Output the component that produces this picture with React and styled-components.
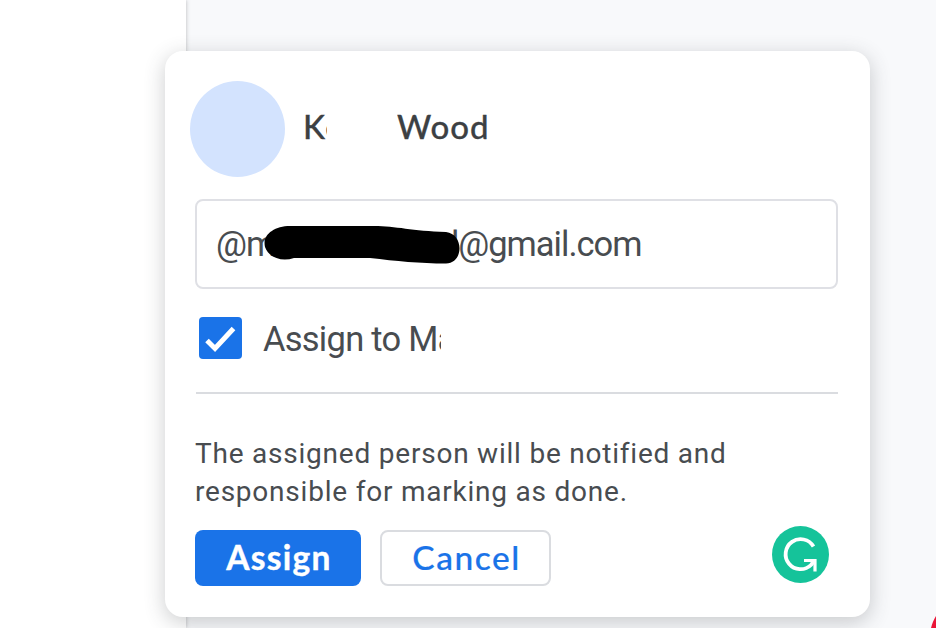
// App.jsx
import React, { useState } from "react";
import styled, { createGlobalStyle } from "styled-components";

const GlobalStyle = createGlobalStyle`
    * {
        box-sizing: border-box;
    }

    body {
        margin: 0;
        overflow: hidden;
        font-family: Roboto, sans-serif;
        color: #484c50;
    }
`;

const Page = styled.div`
    position: relative;
    display: flex;
    width: 936px;
    height: 628px;
    overflow: hidden;
    background-color: #f8f9fb;
`;

const Sheet = styled.div`
    width: 186px;
    background-color: white;
    box-shadow: 0 0 4px rgba(60, 64, 67, 0.35);
`;

const Fab = styled.div`
    position: absolute;
    left: 930px;
    top: 597px;
    width: 80px;
    height: 80px;
    border-radius: 50%;
    background-color: #ea1537;
`;

const Card = styled.div`
    position: absolute;
    left: 165px;
    top: 51px;
    display: flex;
    flex-direction: column;
    width: 705px;
    height: 566px;
    padding: 30px 32px 30px 30px;
    border-radius: 18px;
    background-color: white;
    box-shadow: 0 5px 20px 1px rgba(60, 64, 67, 0.24);
`;

const Header = styled.div`
    display: flex;
    align-items: center;
    height: 96px;
    margin-left: -5px;
`;

const Avatar = styled.div`
    width: 95px;
    height: 96px;
    margin-right: 18px;
    border-radius: 50%;
    background-color: #d3e3fe;
`;

const Name = styled.span`
    width: ${(props) => props.$width};
    margin-top: -6px;
    margin-left: ${(props) => props.$gap || "0"};
    overflow: hidden;
    white-space: nowrap;
    font-family: Lato, sans-serif;
    font-size: 33px;
    font-weight: 500;
    line-height: 40px;
    letter-spacing: ${(props) => props.$spacing || "0"};
    color: #3c4043;
    -webkit-text-stroke: 0.3px #3c4043;
`;

const Field = styled.div`
    position: relative;
    display: flex;
    align-items: center;
    height: 90px;
    margin-top: 22px;
    padding: 0 20px 0 19px;
    border: 2px solid #dfe0e5;
    border-radius: 8px;
    font-size: 34.5px;
    letter-spacing: -1px;
    white-space: nowrap;
`;

const Hidden = styled.span`
    display: flex;
    justify-content: flex-end;
    width: ${(props) => props.$width};
    overflow: hidden;
`;

const Scribble = styled.svg`
    position: absolute;
    left: 65px;
    top: 23px;
`;

const CheckRow = styled.label`
    display: flex;
    align-items: center;
    height: 42px;
    margin-top: 28px;
    padding-left: 4px;
    font-size: 34.5px;
    letter-spacing: -0.75px;
`;

const Checkbox = styled.span`
    display: flex;
    width: 43px;
    height: 42px;
    margin-right: 21px;
    border-radius: 4px;
    background-color: #1a73e8;
`;

const CheckLabel = styled.span`
    width: 178px;
    margin-top: 2px;
    overflow: hidden;
    white-space: nowrap;
    line-height: 42px;
`;

const Divider = styled.div`
    height: 2px;
    margin: 33px 0 41px 1px;
    background-color: #dadce0;
`;

const Note = styled.p`
    margin: 0;
    font-size: 28px;
    line-height: 38px;
    letter-spacing: 0.78px;
    white-space: nowrap;
`;

const Footer = styled.div`
    display: flex;
    align-items: center;
    margin-top: 19px;
`;

const Button = styled.button`
    width: ${(props) => (props.$primary ? "166px" : "171px")};
    height: 56px;
    margin-right: 19px;
    padding: 0 0 3px 2px;
    border: ${(props) => (props.$primary ? "none" : "2px solid #dadce0")};
    border-radius: 8px;
    background-color: ${(props) => (props.$primary ? "#1a73e8" : "white")};
    color: ${(props) => (props.$primary ? "white" : "#1a73e8")};
    font-family: Lato, sans-serif;
    font-size: 33.5px;
    font-weight: ${(props) => (props.$primary ? 700 : 500)};
    letter-spacing: ${(props) => (props.$primary ? "1.3px" : "1.5px")};
    -webkit-text-stroke: ${(props) => (props.$primary ? "0.4px white" : "0.2px #1a73e8")};
`;

const Grammar = styled.svg`
    margin: -8px 9px 0 auto;
`;

function App() {
    const [checked, setChecked] = useState(true);

    return (
        <>
            <GlobalStyle />
            <Page>
                <Sheet />
                <Fab />
                <Card>
                    <Header>
                        <Avatar />
                        <Name $width="24px" $spacing="1.5px">
                            Ke
                        </Name>
                        <Name $width="120px" $gap="70px" $spacing="1px">
                            Wood
                        </Name>
                    </Header>

                    <Field>
                        <span>@m</span>
                        <Hidden $width="183px">d</Hidden>
                        <span>@gmail.com</span>
                        <Scribble width="200" height="42" viewBox="0 0 200 42">
                            <path
                                d="M28 2H112C134 2 150 7 184 8C202 10 202 39 184 39.5C158 39.5 134 37 108 34H32C20 38 7 34 3 23C0 11 12 2 28 2Z"
                                fill="black"
                            />
                        </Scribble>
                    </Field>

                    <CheckRow onClick={() => setChecked(!checked)}>
                        <Checkbox>
                            {checked && (
                                <svg width="43" height="42" viewBox="0 0 43 42">
                                    <path
                                        d="M8 23.5L16 31.5L34.5 11.5"
                                        fill="none"
                                        stroke="white"
                                        strokeWidth="5"
                                    />
                                </svg>
                            )}
                        </Checkbox>
                        <CheckLabel>Assign to Ma</CheckLabel>
                    </CheckRow>

                    <Divider />

                    <Note>
                        The assigned person will be notified and
                        <br />
                        responsible for marking as done.
                    </Note>

                    <Footer>
                        <Button $primary>Assign</Button>
                        <Button>Cancel</Button>
                        <Grammar width="57" height="57" viewBox="0 0 57 57">
                            <circle cx="28.5" cy="28.5" r="28.5" fill="#15c39a" />
                            <path
                                d="M41.5 20.5A15 15 0 1 0 39 39L42.5 34.5"
                                fill="none"
                                stroke="white"
                                strokeWidth="3.8"
                            />
                            <path
                                d="M32 34.5H43V45.5"
                                fill="none"
                                stroke="white"
                                strokeWidth="3.2"
                            />
                        </Grammar>
                    </Footer>
                </Card>
            </Page>
        </>
    );
}

export default App;
